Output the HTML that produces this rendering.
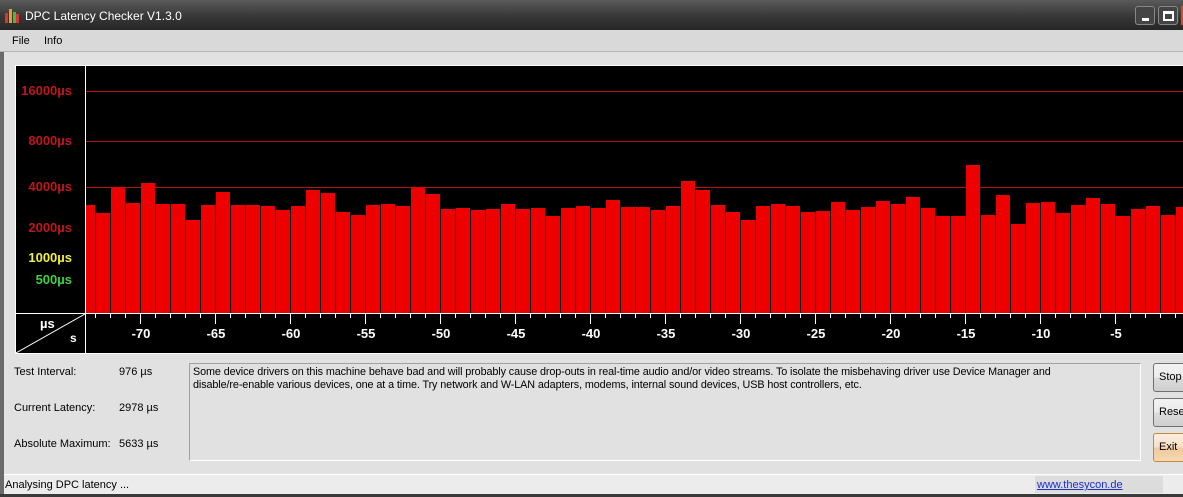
<!DOCTYPE html>
<html><head><meta charset="utf-8"><style>
*{margin:0;padding:0;box-sizing:border-box}
body{width:1183px;height:497px;overflow:hidden;background:#e1e1e1;font-family:"Liberation Sans",sans-serif;font-size:11px;color:#000;position:relative}
.a{position:absolute}
.title{left:0;top:0;width:1183px;height:30px;background:linear-gradient(#5a5a5a,#3a3a3a 50%,#262626);color:#fff;font-size:12px}
.menu{left:0;top:30px;width:1183px;height:22px;background:#d9d9d9;border-bottom:1px solid #b5b5b5}
.yl{font-weight:bold;font-size:13px;text-align:right;width:60px;left:12px;color:#c0161a}
.xl{font-weight:bold;font-size:13px;color:#fff;top:326px;width:40px;text-align:center}
.btn{left:1153px;width:40px;height:29px;border:1px solid #707070;border-radius:3px;background:linear-gradient(#f2f2f2,#ebebeb 50%,#dcdcdc 51%,#cfcfcf);padding:7px 0 0 5px;font-size:11px}
</style></head><body>
<div class="a title">
 <svg class="a" style="left:5px;top:8px" width="14" height="15"><rect x="0" y="5" width="3" height="10" fill="#d33"/><rect x="4" y="1" width="3" height="14" fill="#e8a020"/><rect x="8" y="4" width="3" height="11" fill="#4b4"/><rect x="11" y="6" width="3" height="9" fill="#d33"/></svg>
 <div class="a" style="left:25px;top:9px">DPC Latency Checker V1.3.0</div>
 <div class="a" style="left:1135px;top:6px;width:20px;height:19px;border:1px solid #888;border-radius:3px;background:#444"><div class="a" style="left:6px;top:11px;width:7px;height:3px;background:#fff"></div></div>
 <div class="a" style="left:1158px;top:6px;width:20px;height:19px;border:1px solid #888;border-radius:3px;background:#444"><div class="a" style="left:4px;top:4px;width:11px;height:10px;border:2px solid #fff;border-top-width:3px"></div></div>
 <div class="a" style="left:1181px;top:6px;width:4px;height:19px;background:#d9482b"></div>
</div>
<div class="a menu"><span class="a" style="left:12px;top:5px">File</span><span class="a" style="left:44px;top:5px">Info</span></div>
<div class="a" style="left:0;top:52px;width:4px;height:445px;background:#6a6a6a"></div>
<div class="a" style="left:15px;top:65px;width:1168px;height:289px;border:1px solid #fff;border-right:none;background:#000"></div>
<div class="a" style="left:86px;top:91px;width:1097px;height:1px;background:#b01414"></div>
<div class="a" style="left:86px;top:141px;width:1097px;height:1px;background:#b01414"></div>
<div class="a" style="left:86px;top:187px;width:1097px;height:1px;background:#b01414"></div>
<svg class="a" style="left:16px;top:66px" width="1167" height="287" shape-rendering="crispEdges">
 <g transform="translate(-16,-66)">
 <g id="bars"></g>
 <line x1="85.5" y1="66" x2="85.5" y2="353" stroke="#fff"/>
 <line x1="16" y1="313.5" x2="1183" y2="313.5" stroke="#fff"/>
 <g id="ticks" stroke="#fff"></g>
 </g>
</svg>
<svg class="a" style="left:16px;top:314px" width="70" height="40"><line x1="0" y1="39" x2="69" y2="0" stroke="#fff"/></svg>
<div class="a yl" style="top:83px">16000µs</div>
<div class="a yl" style="top:133px">8000µs</div>
<div class="a yl" style="top:179px">4000µs</div>
<div class="a yl" style="top:220px">2000µs</div>
<div class="a yl" style="top:250px;color:#f0f040">1000µs</div>
<div class="a yl" style="top:272px;color:#40d040">500µs</div>
<div class="a" style="left:40px;top:316px;color:#fff;font-weight:bold;font-size:13px">µs</div>
<div class="a" style="left:70px;top:331px;color:#fff;font-weight:bold;font-size:12px">s</div>
<div class="a xl" style="left:121px">-70</div>
<div class="a xl" style="left:196px">-65</div>
<div class="a xl" style="left:271px">-60</div>
<div class="a xl" style="left:346px">-55</div>
<div class="a xl" style="left:421px">-50</div>
<div class="a xl" style="left:496px">-45</div>
<div class="a xl" style="left:571px">-40</div>
<div class="a xl" style="left:646px">-35</div>
<div class="a xl" style="left:721px">-30</div>
<div class="a xl" style="left:796px">-25</div>
<div class="a xl" style="left:871px">-20</div>
<div class="a xl" style="left:946px">-15</div>
<div class="a xl" style="left:1021px">-10</div>
<div class="a xl" style="left:1096px">-5</div>
<div class="a" style="left:14px;top:366px">Test Interval:</div><div class="a" style="left:119px;top:366px">976 µs</div>
<div class="a" style="left:14px;top:402px">Current Latency:</div><div class="a" style="left:119px;top:402px">2978 µs</div>
<div class="a" style="left:14px;top:438px">Absolute Maximum:</div><div class="a" style="left:119px;top:438px">5633 µs</div>
<div class="a" style="left:189px;top:363px;width:952px;height:98px;border:1px solid #a0a0a0;border-right-color:#fff;border-bottom-color:#fff;padding:2px 3px;line-height:13px;font-size:10.8px;letter-spacing:-0.1px">Some device drivers on this machine behave bad and will probably cause drop-outs in real-time audio and/or video streams. To isolate the misbehaving driver use Device Manager and<br>disable/re-enable various devices, one at a time. Try network and W-LAN adapters, modems, internal sound devices, USB host controllers, etc.</div>
<div class="a btn" style="top:363px">Stop</div>
<div class="a btn" style="top:398px">Reset</div>
<div class="a btn" style="top:433px;border-color:#c68a3a;background:linear-gradient(#fbeee0,#f6dfc3 50%,#efc99b 51%,#f4d8b2)">Exit</div>
<div class="a" style="left:4px;top:474px;width:1179px;height:20px;background:#ececec;border-top:1px solid #fff"></div>
<div class="a" style="left:5px;top:479px">Analysing DPC latency ...</div>
<div class="a" style="left:1035px;top:476px;width:128px;height:17px;background:#dcdcdc"></div>
<div class="a" style="left:1037px;top:479px;color:#1a2fd0;text-decoration:underline">www.thesycon.de</div>
<div class="a" style="left:0;top:494px;width:1183px;height:3px;background:#3a3a3a"></div>
<script>
var z=[188,112,158,98,162,162,210,165,126,165,165,168,180,168,120,129,186,195,165,162,168,112,132,178,174,180,178,162,178,174,198,174,168,174,150,171,171,180,168,93,120,165,186,210,168,162,168,186,183,156,180,171,153,162,141,174,198,198,45,195,135,222,159,156,189,165,144,162,198,177,168,195,171,171];
var s='';
function bar(x,w,zz){var y=Math.round(150+zz/3);s+='<rect x="'+x+'" y="'+y+'" width="'+w+'" height="'+(313-y)+'" fill="#ee0000"/>';}
bar(86,9,165);
for(var k=0;k<z.length;k++){bar(96+15*k,Math.min(14,1183-(96+15*k)),z[k]);}
document.getElementById('bars').innerHTML=s;
var t='';
for(var x=96;x<1183;x+=15){var maj=((x-141)%75===0);t+='<line x1="'+(x-0.5)+'" y1="314" x2="'+(x-0.5)+'" y2="'+(maj?324:318)+'"/>';}
document.getElementById('ticks').innerHTML=t;
</script>
</body></html>
